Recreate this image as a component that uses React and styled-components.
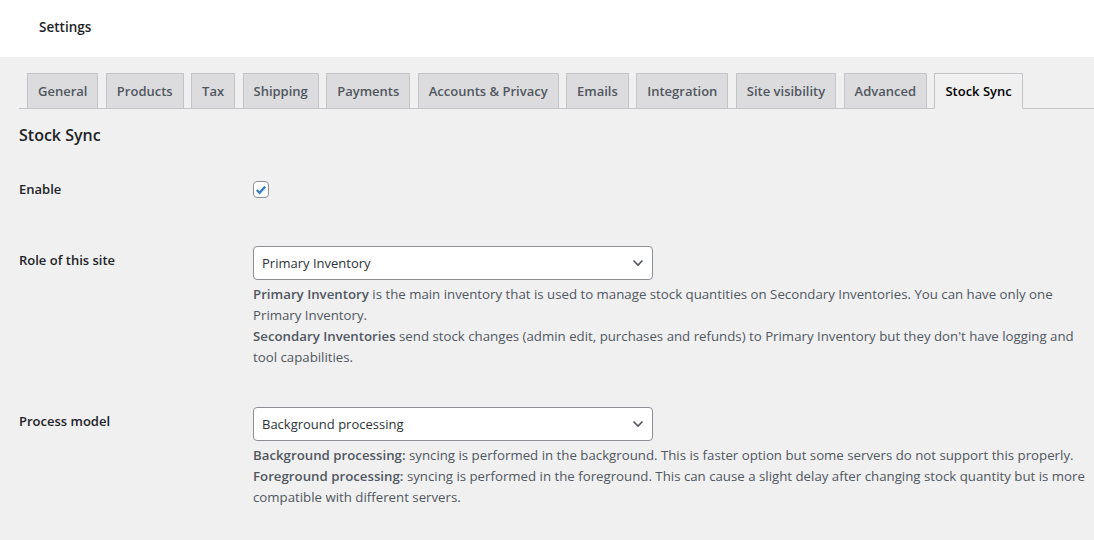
import React from 'react'
import styled, { createGlobalStyle } from 'styled-components';

const GlobalStyle = createGlobalStyle`
  html, body {
    margin: 0;
    padding: 0;
    background: #f0f0f1;
    font-family: "Open Sans", "Noto Sans", sans-serif;
    color: #3c434a;
  }
  * { box-sizing: border-box; }
`;

const Header = styled.header`
  height: 57px;
  background: #fff;
  display: flex;
  align-items: center;
  padding: 0 0 3px 39px;
  font-size: 13.5px;
  font-weight: 600;
  color: #1d2327;
`;

const Content = styled.main`
  padding: 16px 0 0 19px;
`;

const TabBar = styled.nav`
  display: flex;
  gap: 7.4px;
  padding-left: 8px;
  border-bottom: 1px solid #c3c4c7;
`;

const Tab = styled.a`
  display: block;
  padding: 5px 10px;
  margin-bottom: -1px;
  font-size: 13px;
  line-height: 24px;
  font-weight: 600;
  white-space: nowrap;
  text-decoration: none;
  border: 1px solid #c3c4c7;
  background: ${({ $active }) => ($active ? '#f0f0f1' : '#dcdcde')};
  border-bottom-color: ${({ $active }) => ($active ? '#f0f0f1' : '#c3c4c7')};
  color: ${({ $active }) => ($active ? '#000' : '#50575e')};
`;

const Title = styled.h2`
  margin: 15px 0 20px;
  font-size: 16px;
  line-height: 22px;
  font-weight: 600;
  color: #1d2327;
`;

const Row = styled.div`
  display: grid;
  grid-template-columns: 234px 1fr;
  padding: 15px 0;
  min-height: ${({ $minHeight }) => $minHeight || 'auto'};
`;

const Label = styled.div`
  margin-top: ${({ $offset }) => $offset}px;
  font-size: 13px;
  line-height: 20px;
  font-weight: 600;
  color: #1d2327;
`;

const Field = styled.div`
  padding-right: 2px;
`;

const CheckBox = styled.span`
  display: flex;
  align-items: center;
  justify-content: center;
  width: 16px;
  height: 17px;
  background: #fff;
  border: 1px solid #8c8f94;
  border-radius: 4px;
`;

const Select = styled.div`
  position: relative;
  display: flex;
  align-items: center;
  width: 400px;
  height: 34px;
  padding: 0 24px 0 8px;
  background: #fff;
  border: 1px solid #8c8f94;
  border-radius: 4px;
  font-size: 13px;
  color: #2c3338;
  svg {
    position: absolute;
    right: 8px;
    top: 12px;
  }
`;

const Description = styled.p`
  margin: 4px 0 9px;
  font-size: 13.25px;
  line-height: 21px;
  color: #50575e;
  b { font-weight: 600; }
`;

const Chevron = () => (
  <svg width="12" height="8" viewBox="0 0 12 8">
    <path d="M1.5 1.5 L6 6 L10.5 1.5" fill="none" stroke="#50575e" strokeWidth="1.6" />
  </svg>
);

const tabs = ['General', 'Products', 'Tax', 'Shipping', 'Payments', 'Accounts & Privacy', 'Emails', 'Integration', 'Site visibility', 'Advanced', 'Stock Sync'];

const App = () => {
  return (
    <>
      <GlobalStyle />
      <Header>Settings</Header>
      <Content>
        <TabBar>
          {tabs.map((t) => (
            <Tab key={t} $active={t === 'Stock Sync'}>{t}</Tab>
          ))}
        </TabBar>
        <Title>Stock Sync</Title>

        <Row $minHeight="65px">
          <Label $offset={-2}>Enable</Label>
          <Field>
            <CheckBox>
              <svg width="12" height="12" viewBox="0 0 12 12">
                <path d="M1.8 6 L4.6 8.8 L10.2 2.6" fill="none" stroke="#3582c4" strokeWidth="2.4" />
              </svg>
            </CheckBox>
          </Field>
        </Row>

        <Row>
          <Label $offset={4}>Role of this site</Label>
          <Field>
            <Select>Primary Inventory<Chevron /></Select>
            <Description>
              <b>Primary Inventory</b> is the main inventory that is used to manage stock quantities on Secondary Inventories. You can have only one Primary Inventory.
              <br />
              <b>Secondary Inventories</b> send stock changes (admin edit, purchases and refunds) to Primary Inventory but they don't have logging and tool capabilities.
            </Description>
          </Field>
        </Row>

        <Row>
          <Label $offset={4}>Process model</Label>
          <Field>
            <Select>Background processing<Chevron /></Select>
            <Description>
              <b>Background processing:</b> syncing is performed in the background. This is faster option but some servers do not support this properly.
              <br />
              <b>Foreground processing:</b> syncing is performed in the foreground. This can cause a slight delay after changing stock quantity but is more compatible with different servers.
            </Description>
          </Field>
        </Row>
      </Content>
    </>
  )
}

export default App;
